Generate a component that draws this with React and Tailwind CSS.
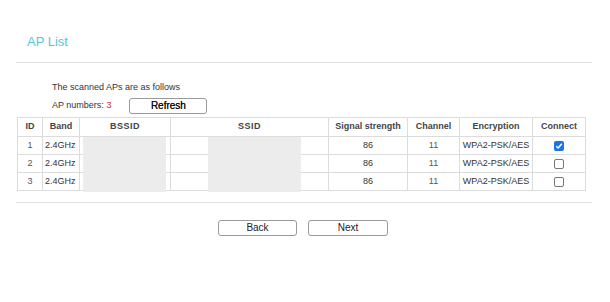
export default function App() {
  const rows = [1, 2, 3];
  const cell = "border border-[#dcdcdc] text-center";
  return (
    <div className="w-[610px] h-[302px] bg-white text-[#333] font-['Liberation_Sans',Arial,sans-serif] overflow-hidden">
      <div className="pt-[34px] pl-[27px] text-[13px] leading-[16px] text-[#55c8d4]">AP List</div>
      <div className="mt-[12px] ml-[16px] w-[576px] h-px bg-[#e2e2e2]"></div>
      <div className="pl-[52px] pt-[18px] text-[9px] leading-[12px] text-[#333]">The scanned APs are as follows</div>
      <div className="flex items-center pl-[52px] mt-[5px] h-[16px]">
        <span className="text-[9px] text-[#333]">AP numbers: <span className="text-[#d9243c]">3</span></span>
        <button className="ml-[18px] w-[78px] h-[16px] border border-[#9a9a9a] rounded-[3px] bg-white text-[10px] leading-[14px] text-[#111] [text-shadow:0_0_0.4px_#111]">Refresh</button>
      </div>
      <table className="ml-[17px] mt-[3px] border-collapse text-[9px] text-[#333] table-fixed w-[568px]">
        <colgroup>
          <col className="w-[25px]" />
          <col className="w-[37px]" />
          <col className="w-[91px]" />
          <col className="w-[158px]" />
          <col className="w-[79px]" />
          <col className="w-[52px]" />
          <col className="w-[73px]" />
          <col className="w-[53px]" />
        </colgroup>
        <thead>
          <tr className="h-[19px]">
            <th className={cell + " font-bold text-[#444]"}>ID</th>
            <th className={cell + " font-bold text-[#444]"}>Band</th>
            <th className={cell + " font-bold text-[#444] tracking-[0.5px]"}>BSSID</th>
            <th className={cell + " font-bold text-[#444] tracking-[0.5px]"}>SSID</th>
            <th className={cell + " font-bold text-[#444]"}>Signal strength</th>
            <th className={cell + " font-bold text-[#444]"}>Channel</th>
            <th className={cell + " font-bold text-[#444]"}>Encryption</th>
            <th className={cell + " font-bold text-[#444]"}>Connect</th>
          </tr>
        </thead>
        <tbody>
          {rows.map((r, i) => (
            <tr key={r} className="h-[18px]">
              <td className={cell + " text-[#555]"}>{r}</td>
              <td className={cell + " text-left pl-[2px]"}>2.4GHz</td>
              <td className={cell + " p-0 relative"}>
                {i === 0 && <div className="absolute left-[3px] top-0 w-[83px] h-[55px] bg-[#ececec]"></div>}
              </td>
              <td className={cell + " p-0 relative"}>
                {i === 0 && <div className="absolute left-[37px] top-0 w-[93px] h-[55px] bg-[#ececec]"></div>}
              </td>
              <td className={cell}>86</td>
              <td className={cell + " text-[#555]"}>11</td>
              <td className={cell}>WPA2-PSK/AES</td>
              <td className={cell}>
                <div className="flex justify-center">
                  {i === 0 ? (
                    <div className="w-[10px] h-[10px] rounded-[2px] bg-[#1a73e8] flex items-center justify-center">
                      <svg width="8" height="8" viewBox="0 0 8 8"><path d="M1.2 4.2 L3.2 6 L6.8 1.8" stroke="white" strokeWidth="1.5" fill="none" /></svg>
                    </div>
                  ) : (
                    <div className="w-[10px] h-[10px] rounded-[2px] border border-[#777] bg-white"></div>
                  )}
                </div>
              </td>
            </tr>
          ))}
        </tbody>
      </table>
      <div className="mt-[11px] ml-[16px] w-[576px] h-px bg-[#e2e2e2]"></div>
      <div className="flex pl-[218px] mt-[17px] gap-[11px]">
        <button className="w-[79px] h-[16px] border border-[#9a9a9a] rounded-[3px] bg-white text-[10px] leading-[14px] text-[#222]">Back</button>
        <button className="w-[80px] h-[16px] border border-[#9a9a9a] rounded-[3px] bg-white text-[10px] leading-[14px] text-[#222]">Next</button>
      </div>
    </div>
  );
}
